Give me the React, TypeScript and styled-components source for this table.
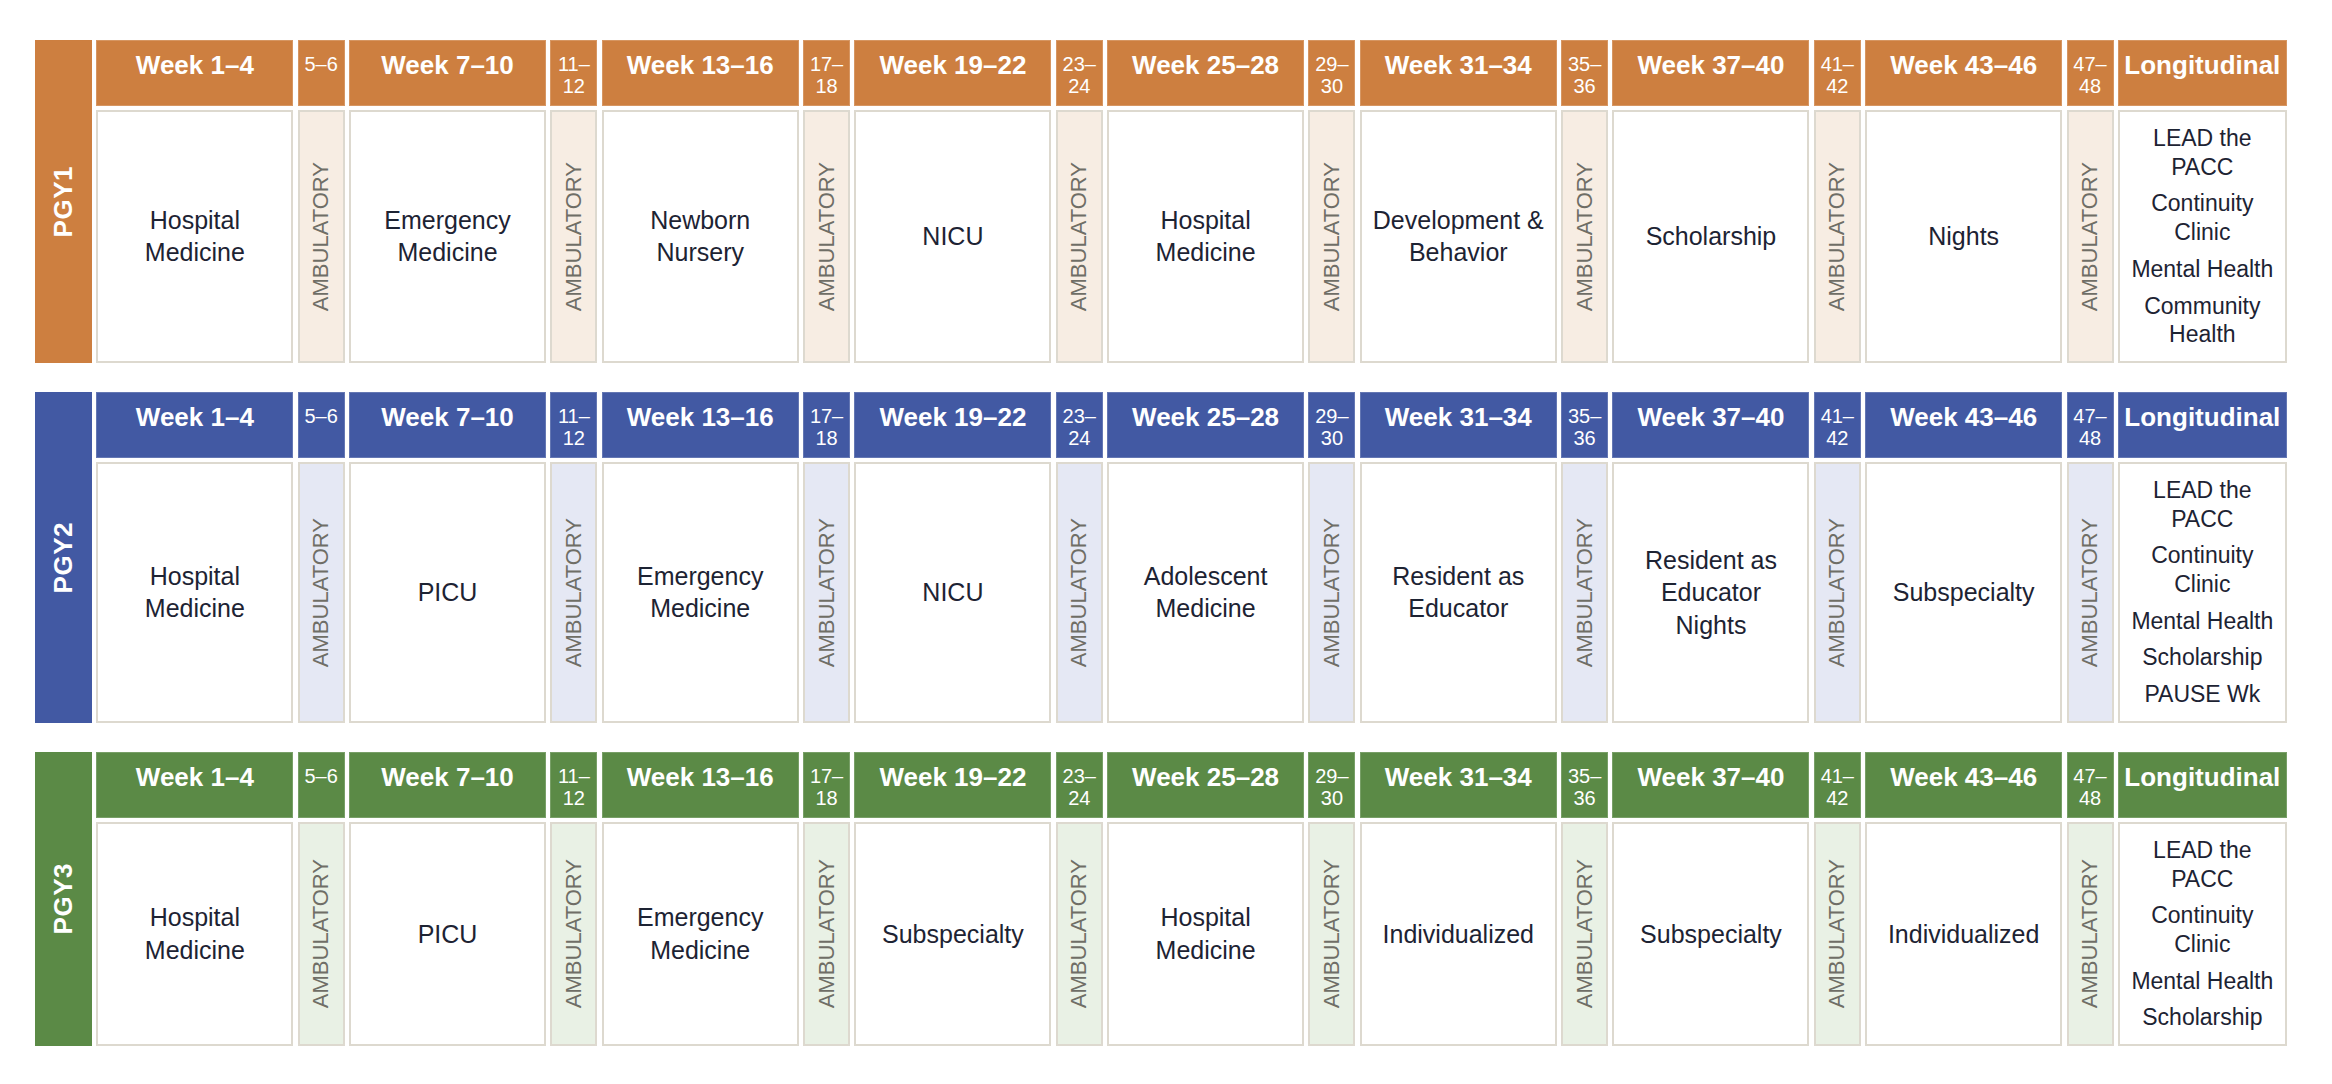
import React from "react";
import styled, { createGlobalStyle } from "styled-components";

const GlobalStyle = createGlobalStyle`
  html, body { margin: 0; padding: 0; background: #ffffff; }
  body { font-family: "Liberation Sans", Arial, Helvetica, sans-serif; }
`;

type Theme = { main: string; soft: string };

const THEMES: Record<string, Theme> = {
  orange: { main: "#cd7f40", soft: "#f7ede3" },
  blue: { main: "#4259a3", soft: "#e5e8f4" },
  green: { main: "#5b8a46", soft: "#e9f1e5" },
};

const Page = styled.div`
  display: flex;
  flex-direction: column;
  gap: 29px;
  padding: 40px 0 0 35px;
`;

const Section = styled.section`
  display: grid;
  grid-template-columns: 57px repeat(8, 197px 47px) 169px;
  grid-template-rows: 66px auto;
  column-gap: 4.35px;
  row-gap: 4px;
`;

const YearLabel = styled.div<{ $c: string }>`
  grid-row: 1 / 3;
  grid-column: 1;
  background: ${(p) => p.$c};
  color: #ffffff;
  display: flex;
  align-items: center;
  justify-content: center;
  font-weight: 700;
  font-size: 26px;
  letter-spacing: 0.5px;
  span {
    writing-mode: vertical-rl;
    transform: rotate(180deg);
  }
`;

const HeadCell = styled.div<{ $c: string; $narrow?: boolean }>`
  background: ${(p) => p.$c};
  box-shadow: inset 0 0 0 1px rgba(255, 255, 255, 0.18);
  color: #ffffff;
  text-align: center;
  box-sizing: border-box;
  font-weight: ${(p) => (p.$narrow ? 400 : 700)};
  font-size: ${(p) => (p.$narrow ? "20px" : "26px")};
  line-height: ${(p) => (p.$narrow ? "22px" : "30px")};
  padding-top: ${(p) => (p.$narrow ? "13px" : "10px")};
  white-space: nowrap;
`;

const BodyCell = styled.div`
  background: #ffffff;
  border: 2px solid #ddd9cf;
  box-sizing: border-box;
  display: flex;
  align-items: center;
  justify-content: center;
  text-align: center;
  color: #1d2333;
  font-size: 25px;
  line-height: 32.5px;
`;

const AmbCell = styled.div<{ $bg: string }>`
  background: ${(p) => p.$bg};
  border: 2px solid #ddd9cf;
  box-sizing: border-box;
  display: flex;
  align-items: center;
  justify-content: center;
  color: #6f6e66;
  font-size: 22px;
  span {
    writing-mode: vertical-rl;
    transform: rotate(180deg);
    white-space: nowrap;
  }
`;

const LongCell = styled.div`
  background: #ffffff;
  border: 2px solid #ddd9cf;
  box-sizing: border-box;
  padding: 12px 4px;
  display: flex;
  flex-direction: column;
  align-items: center;
  justify-content: center;
  gap: 8px;
  text-align: center;
  color: #1d2333;
  font-size: 23px;
  line-height: 28.7px;
`;

const Item = styled.div`
  white-space: nowrap;
`;

const Lines: React.FC<{ lines: string[] }> = ({ lines }) => (
  <>
    {lines.map((l, i) => (
      <React.Fragment key={i}>
        {i > 0 && <br />}
        {l}
      </React.Fragment>
    ))}
  </>
);

const WIDE_HEADS = [
  "Week 1–4",
  "Week 7–10",
  "Week 13–16",
  "Week 19–22",
  "Week 25–28",
  "Week 31–34",
  "Week 37–40",
  "Week 43–46",
];
const NARROW_HEADS: string[][] = [
  ["5–6"],
  ["11–", "12"],
  ["17–", "18"],
  ["23–", "24"],
  ["29–", "30"],
  ["35–", "36"],
  ["41–", "42"],
  ["47–", "48"],
];

type Year = {
  label: string;
  theme: Theme;
  blocks: string[][];
  longitudinal: string[][];
};

const YEARS: Year[] = [
  {
    label: "PGY1",
    theme: THEMES.orange,
    blocks: [
      ["Hospital", "Medicine"],
      ["Emergency", "Medicine"],
      ["Newborn", "Nursery"],
      ["NICU"],
      ["Hospital", "Medicine"],
      ["Development &", "Behavior"],
      ["Scholarship"],
      ["Nights"],
    ],
    longitudinal: [
      ["LEAD the", "PACC"],
      ["Continuity", "Clinic"],
      ["Mental Health"],
      ["Community", "Health"],
    ],
  },
  {
    label: "PGY2",
    theme: THEMES.blue,
    blocks: [
      ["Hospital", "Medicine"],
      ["PICU"],
      ["Emergency", "Medicine"],
      ["NICU"],
      ["Adolescent", "Medicine"],
      ["Resident as", "Educator"],
      ["Resident as", "Educator", "Nights"],
      ["Subspecialty"],
    ],
    longitudinal: [
      ["LEAD the", "PACC"],
      ["Continuity", "Clinic"],
      ["Mental Health"],
      ["Scholarship"],
      ["PAUSE Wk"],
    ],
  },
  {
    label: "PGY3",
    theme: THEMES.green,
    blocks: [
      ["Hospital", "Medicine"],
      ["PICU"],
      ["Emergency", "Medicine"],
      ["Subspecialty"],
      ["Hospital", "Medicine"],
      ["Individualized"],
      ["Subspecialty"],
      ["Individualized"],
    ],
    longitudinal: [
      ["LEAD the", "PACC"],
      ["Continuity", "Clinic"],
      ["Mental Health"],
      ["Scholarship"],
    ],
  },
];

const YearSection: React.FC<{ year: Year }> = ({ year }) => {
  const { theme } = year;
  return (
    <Section>
      <YearLabel $c={theme.main}>
        <span>{year.label}</span>
      </YearLabel>
      {WIDE_HEADS.map((h, i) => (
        <React.Fragment key={h}>
          <HeadCell $c={theme.main}>{h}</HeadCell>
          <HeadCell $c={theme.main} $narrow>
            <Lines lines={NARROW_HEADS[i]} />
          </HeadCell>
        </React.Fragment>
      ))}
      <HeadCell $c={theme.main}>Longitudinal</HeadCell>
      {year.blocks.map((b, i) => (
        <React.Fragment key={i}>
          <BodyCell>
            <div>
              <Lines lines={b} />
            </div>
          </BodyCell>
          <AmbCell $bg={theme.soft}>
            <span>AMBULATORY</span>
          </AmbCell>
        </React.Fragment>
      ))}
      <LongCell>
        {year.longitudinal.map((it, i) => (
          <Item key={i}>
            <Lines lines={it} />
          </Item>
        ))}
      </LongCell>
    </Section>
  );
};

export default function App() {
  return (
    <>
      <GlobalStyle />
      <Page>
        {YEARS.map((y) => (
          <YearSection key={y.label} year={y} />
        ))}
      </Page>
    </>
  );
}
